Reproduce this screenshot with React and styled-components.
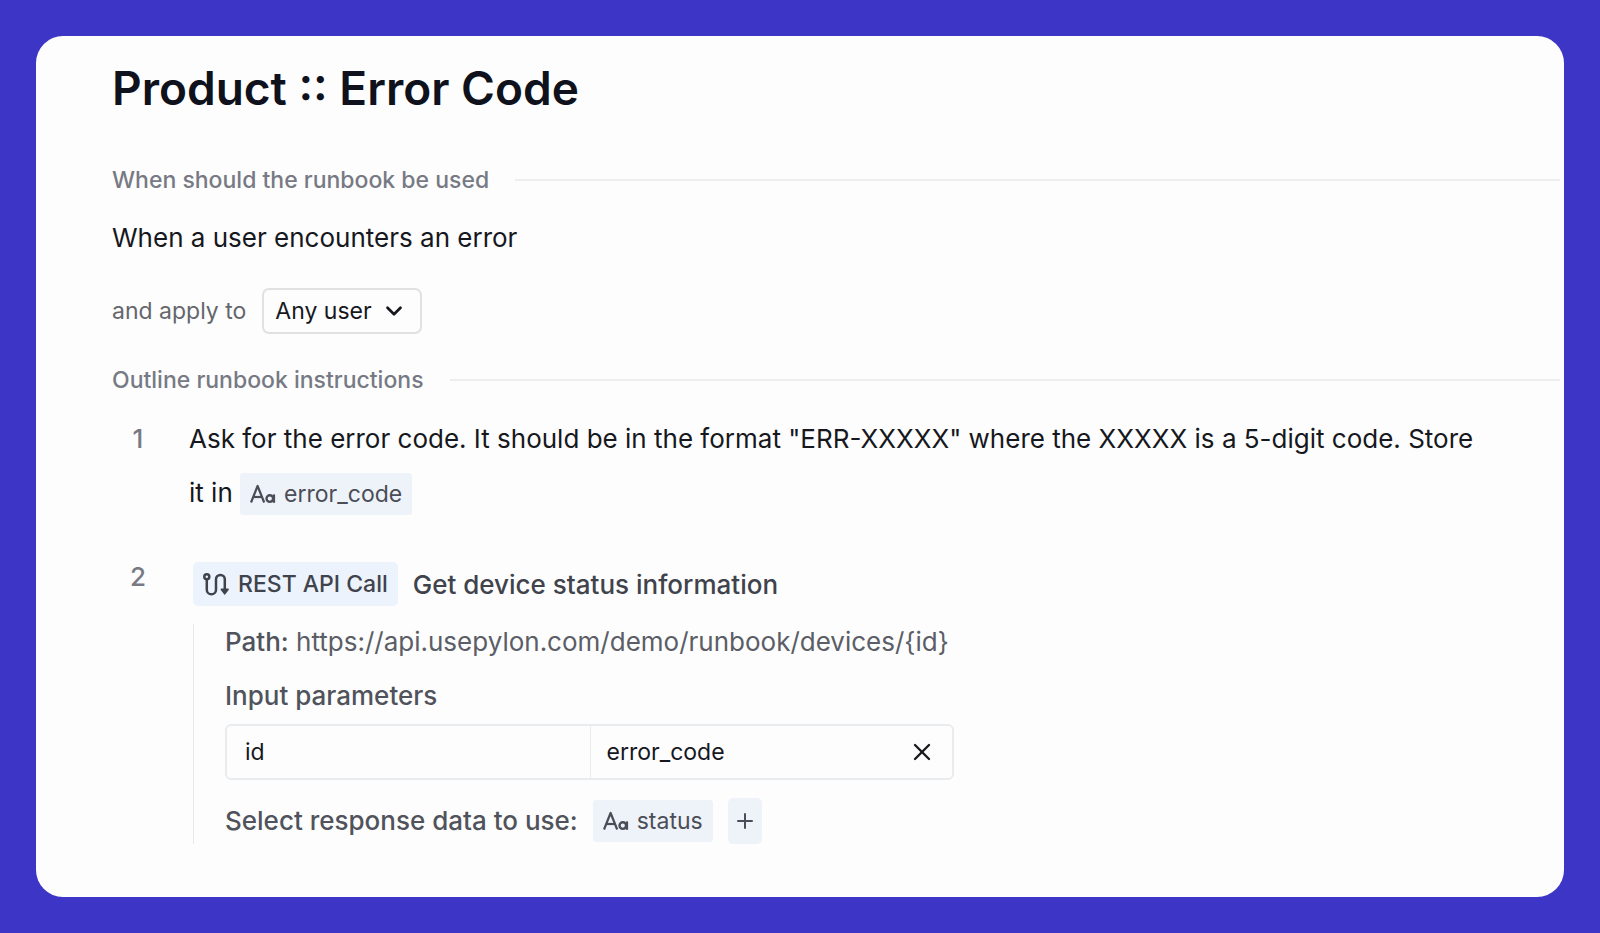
import styled, { createGlobalStyle } from "styled-components";
import { ChevronDown, Plus, X } from "lucide-react";

const parameters = [{ name: "id", value: "error_code" }];

function TextTypeIcon() {
  return (
    <svg
      width="26"
      height="20"
      viewBox="0 0 26 20"
      fill="none"
      stroke="currentColor"
      strokeWidth="2.2"
      strokeLinejoin="round"
      aria-hidden="true"
    >
      <polyline points="1,18.5 7.6,2 14.2,18.5" />
      <line x1="3.4" y1="13" x2="11.8" y2="13" />
      <circle cx="19.8" cy="14.6" r="3.3" strokeWidth="2.4" />
      <line x1="23.9" y1="10.4" x2="23.9" y2="18.8" strokeWidth="2.4" />
    </svg>
  );
}

function RouteIcon() {
  return (
    <svg
      width="26"
      height="23"
      viewBox="0 0 26 23"
      fill="none"
      stroke="currentColor"
      strokeWidth="2.5"
      strokeLinejoin="round"
      aria-hidden="true"
    >
      <circle cx="3.8" cy="3.8" r="2.5" />
      <path d="M3.8 6.3V16.7a4.6 4.6 0 0 0 9.2 0V6.3a4.4 4.4 0 0 1 8.8 0V17" />
      <path
        d="M18.4 16.4h6.6l-3.3 4.4z"
        fill="currentColor"
        strokeWidth="1.6"
      />
    </svg>
  );
}

function SectionHeading({ children }) {
  return (
    <StyledSectionHeading>
      {children}
      <StyledRule />
    </StyledSectionHeading>
  );
}

function Variable({ name }) {
  return (
    <StyledVariable>
      <TextTypeIcon />
      {name}
    </StyledVariable>
  );
}

export default function App() {
  return (
    <>
      <GlobalStyle />
      <StyledCard>
        <StyledTitle>Product :: Error Code</StyledTitle>

        <SectionHeading>When should the runbook be used</SectionHeading>
        <StyledCondition>When a user encounters an error</StyledCondition>
        <StyledAudience>
          <label htmlFor="audience">and apply to</label>
          <StyledSelectWrapper>
            <StyledSelect id="audience" defaultValue="any">
              <option value="any">Any user</option>
            </StyledSelect>
            <ChevronDown size={26} strokeWidth={2.5} aria-hidden="true" />
          </StyledSelectWrapper>
        </StyledAudience>

        <SectionHeading>Outline runbook instructions</SectionHeading>
        <StyledSteps>
          <StyledStep>
            <StyledNumber>1</StyledNumber>
            <StyledInstruction>
              Ask for the error code. It should be in the format
              &quot;ERR-XXXXX&quot; where the XXXXX is a 5-digit code. Store it
              in <Variable name="error_code" />
            </StyledInstruction>
          </StyledStep>
          <StyledStep>
            <StyledNumber>2</StyledNumber>
            <div>
              <StyledCallHeader>
                <StyledCallType>
                  <RouteIcon />
                  REST API Call
                </StyledCallType>
                Get device status information
              </StyledCallHeader>
              <StyledCallBody>
                <StyledPath>
                  <StyledLabel>Path:</StyledLabel>{" "}
                  https://api.usepylon.com/demo/runbook/devices/&#123;id&#125;
                </StyledPath>
                <StyledParametersTitle>Input parameters</StyledParametersTitle>
                <StyledTable aria-label="Input parameters">
                  <tbody>
                    {parameters.map(({ name, value }) => (
                      <tr key={name}>
                        <StyledCell>{name}</StyledCell>
                        <StyledCell>
                          <StyledValue>
                            {value}
                            <StyledRemoveButton aria-label={`Remove ${name}`}>
                              <X size={28} strokeWidth={2} />
                            </StyledRemoveButton>
                          </StyledValue>
                        </StyledCell>
                      </tr>
                    ))}
                  </tbody>
                </StyledTable>
                <StyledResponse>
                  <StyledLabel>Select response data to use:</StyledLabel>
                  <Variable name="status" />
                  <StyledAddButton aria-label="Add response data">
                    <Plus size={24} strokeWidth={2} />
                  </StyledAddButton>
                </StyledResponse>
              </StyledCallBody>
            </div>
          </StyledStep>
        </StyledSteps>
      </StyledCard>
    </>
  );
}

const GlobalStyle = createGlobalStyle`
  * {
    box-sizing: border-box;
  }

  body {
    margin: 0;
    padding: 36px;
    background-color: #3d35c5;
    font-family: Inter, "Liberation Sans", sans-serif;
  }

  button,
  select {
    font: inherit;
    color: inherit;
  }
`;

const StyledCard = styled.main`
  min-height: calc(100vh - 72px);
  padding: 24px 4px 48px 76px;
  border-radius: 27px;
  background-color: #fdfdfd;
  color: #16181d;
  font-size: 26px;
`;

const StyledTitle = styled.h1`
  margin: 0 0 48px;
  font-size: 46px;
  font-weight: 600;
  line-height: 56px;
  color: #0f121c;
`;

const StyledSectionHeading = styled.h2`
  display: flex;
  align-items: center;
  gap: 26px;
  margin: 0;
  font-size: 23px;
  font-weight: 500;
  line-height: 32px;
  color: #777a84;
`;

const StyledRule = styled.span`
  flex: 1;
  height: 2px;
  background-color: #ebedee;
`;

const StyledCondition = styled.p`
  margin: 24px 0 32px;
  line-height: 36px;
`;

const StyledAudience = styled.div`
  display: flex;
  align-items: center;
  gap: 16px;
  margin-bottom: 30px;
  font-size: 23px;
  color: #64666c;
`;

const StyledSelectWrapper = styled.span`
  position: relative;
  color: #16181d;

  svg {
    position: absolute;
    top: 10px;
    right: 15px;
    pointer-events: none;
  }
`;

const StyledSelect = styled.select`
  appearance: none;
  display: block;
  height: 46px;
  padding: 0 48px 0 11px;
  border: 2px solid #dfe1e3;
  border-radius: 7px;
  background-color: transparent;
`;

const StyledSteps = styled.ol`
  display: grid;
  gap: 30px;
  margin: 16px 0 0;
  padding: 0;
  list-style: none;
`;

const StyledStep = styled.li`
  display: grid;
  grid-template-columns: 52px 1fr;
  gap: 25px;
`;

const StyledNumber = styled.span`
  text-align: center;
  font-weight: 500;
  line-height: 54px;
  color: #777a84;
`;

const StyledInstruction = styled.p`
  margin: 0;
  padding-right: 68px;
  line-height: 54px;
`;

const StyledVariable = styled.span`
  display: inline-flex;
  align-items: baseline;
  gap: 8px;
  height: 42px;
  padding: 0 10px;
  border-radius: 3px;
  background-color: #eef3f9;
  font-size: 23px;
  line-height: 42px;
  color: #4b4d57;

  svg {
    align-self: center;
  }
`;

const StyledCallHeader = styled.div`
  display: flex;
  align-items: center;
  gap: 15px;
  padding: 12px 0 18px 4px;
  font-weight: 500;
  color: #40434c;
`;

const StyledCallType = styled.span`
  display: flex;
  align-items: center;
  gap: 9px;
  height: 44px;
  padding: 0 10px;
  border-radius: 5px;
  background-color: #edf3fd;
  font-size: 23px;
`;

const StyledCallBody = styled.div`
  width: 761px;
  max-width: 100%;
  margin-left: 4px;
  padding-left: 31px;
  border-left: 1px solid #e6e9ec;
  line-height: 36px;
  color: #5b5e66;
`;

const StyledPath = styled.p`
  margin: 0;
`;

const StyledLabel = styled.span`
  font-weight: 500;
  color: #50535c;
`;

const StyledParametersTitle = styled.h3`
  margin: 18px 0 10px;
  font-size: 26px;
  font-weight: 500;
  color: #50535c;
`;

const StyledTable = styled.table`
  width: 100%;
  table-layout: fixed;
  border: 2px solid #e9ecee;
  border-radius: 6px;
  border-spacing: 0;
  font-size: 23px;
  color: #16181d;
`;

const StyledCell = styled.td`
  height: 52px;
  padding: 0 18px;

  & + & {
    padding: 0 16px;
    border-left: 1px solid #e9ecee;
  }
`;

const StyledValue = styled.div`
  display: flex;
  align-items: center;
  justify-content: space-between;
`;

const StyledRemoveButton = styled.button`
  display: flex;
  padding: 0;
  border: none;
  background: none;
`;

const StyledResponse = styled.div`
  display: flex;
  align-items: center;
  gap: 15px;
  margin-top: 18px;
`;

const StyledAddButton = styled.button`
  display: flex;
  align-items: center;
  justify-content: center;
  width: 34px;
  height: 46px;
  padding: 0;
  border: none;
  border-radius: 5px;
  background-color: #eef3f9;
  color: #4b4d57;
`;
